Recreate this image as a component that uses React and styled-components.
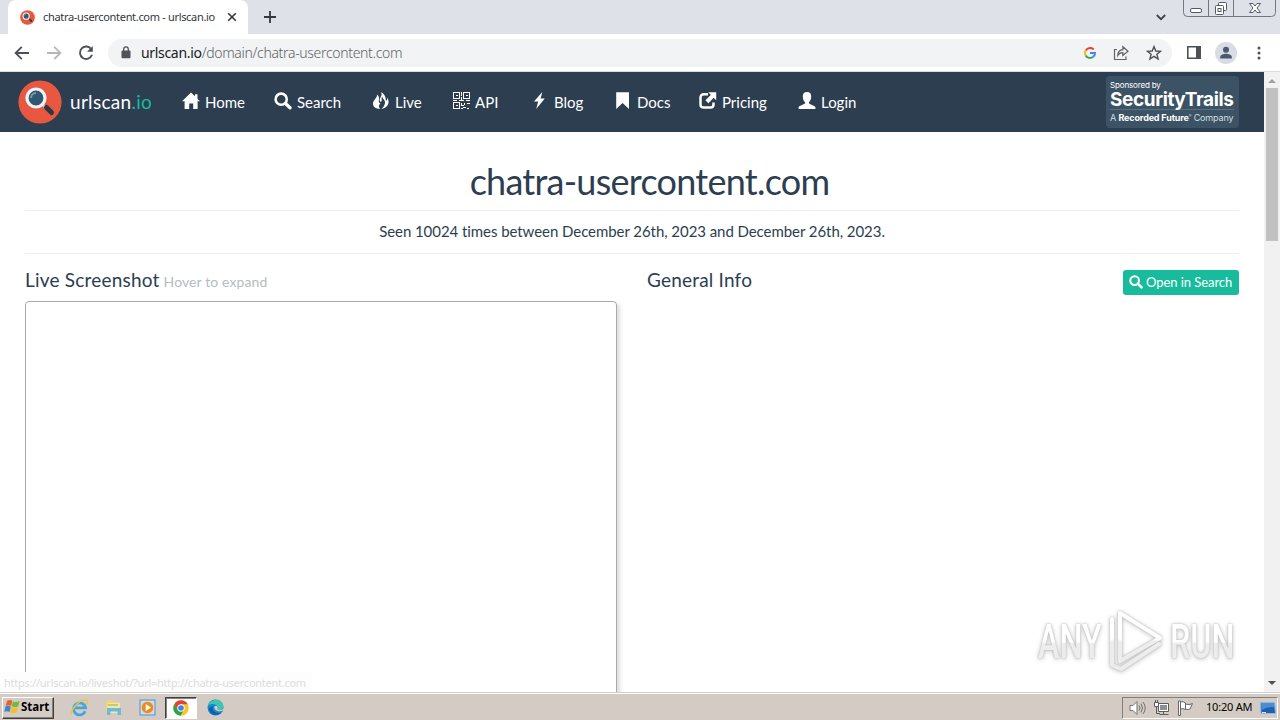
import React from "react";
import styled, { createGlobalStyle } from "styled-components";

const navItems = [
  { icon: "home", label: "Home", width: 92 },
  { icon: "search", label: "Search", width: 98 },
  { icon: "fire", label: "Live", width: 80 },
  { icon: "qrcode", label: "API", width: 79 },
  { icon: "flash", label: "Blog", width: 83 },
  { icon: "bookmark", label: "Docs", width: 85 },
  { icon: "share", label: "Pricing", width: 99 },
  { icon: "user", label: "Login", width: 62 },
];

const glyphs = {
  home: <path d="M9 0.5 L13 4.3 V2.2 H15.5 V6.8 L18 9.3 H15.6 V17 H11.2 V11.5 H7.2 V17 H2.6 V9.3 H0 Z" />,
  search: (
    <>
      <circle cx="7.2" cy="7.2" r="5.6" fill="none" stroke="currentColor" strokeWidth="2.6" />
      <path d="M11.5 11.5 L16 15.8" stroke="currentColor" strokeWidth="3.3" strokeLinecap="round" />
    </>
  ),
  fire: (
    <path d="M8.6 0 C11.6 3 7.1 5.5 7.7 8.4 C8 10.2 9.6 10.2 9.7 8.6 C9.8 7 9.2 6.2 10.1 4.4 C10.8 7.2 13 7.6 13 10.2 C13 12.8 11.8 14.8 9.4 17 C16 15.7 18.2 10.5 15.4 5.4 C15.4 7.6 14.7 8.6 13.8 8.7 C14.1 5 12.3 1.5 8.6 0 Z M5 2.6 C5.4 6 1 8 1 11.7 C1 14.7 3.6 16.7 8.2 17 C6.2 14.8 6.8 13.2 8.4 11.6 C6 10.6 7 7.7 7 6.2 C7 4.8 6 3.4 5 2.6 Z" />
  ),
  qrcode: (
    <g fill="none" stroke="currentColor" strokeWidth="1.1" shapeRendering="crispEdges">
      <path d="M1.5 .5H7.5V6.5H1.5Z M11.5 .5H17.5V6.5H11.5Z M1.5 10.5H7.5V16.5H1.5Z" />
      <path d="M4 3.5H5.5 M14 3.5H15.5 M4 13.5H5.5" />
      <path d="M9.5 0V3 M8.5 3.5H10 M9.5 5V8 M1 8.5H5 M7 8.5H12 M13.5 8.5H17.5 M9.5 11V13.5H12 M12.5 10.5V13 M15 11.5H17.5 M10.5 15.5H14 M9 16.5H11 M15 16.5H17" />
    </g>
  ),
  flash: <path d="M11.3 0 L3 9.4 H7.2 L5.2 17 L13.8 6.6 H9.6 Z" />,
  bookmark: <path d="M2.2 0.3 H15 V17 L8.6 11 L2.2 17 Z" />,
  share: (
    <>
      <path d="M9 2.2H5C2.7 2.2 1.5 3.4 1.5 5.5V12.5C1.5 14.6 2.7 15.6 5 15.6H11.4C13.5 15.6 14.5 14.6 14.5 12.5V10.5" fill="none" stroke="currentColor" strokeWidth="2.5" />
      <path d="M9.3 0.2H17.2V8.2L14.7 5.8L9.4 11.2L6.4 8.2L11.8 2.9Z" />
    </>
  ),
  user: <path d="M9 0 C6 0 4.6 1.8 4.8 4.7 C4.9 7.2 5.7 8.9 7 10.2 V11.5 C4.5 13.2 1.1 13.7 0.6 15.2 V17 H17.4 V15.2 C16.9 13.7 13.5 13.2 11 11.5 V10.2 C12.3 8.9 13.1 7.2 13.2 4.7 C13.4 1.8 12 0 9 0 Z" />,
};

function Glyph({ name, size = 18 }) {
  return (
    <svg width={size} height={size} viewBox="0 0 18 18" fill="currentColor">
      {glyphs[name]}
    </svg>
  );
}

function UrlscanLogo({ size }) {
  return (
    <svg width={size} height={size} viewBox="0 0 44 44">
      <circle cx="22" cy="22" r="21.6" fill="#e8573f" />
      <path d="M25 25 L28 28" stroke="#b9bec2" strokeWidth="3" />
      <path d="M28.5 27.5 L33.5 32.5" stroke="#2c3747" strokeWidth="5" strokeLinecap="round" />
      <circle cx="18" cy="18" r="9" fill="#2f5873" stroke="#f1f3f3" strokeWidth="3.2" />
      <path d="M13 18 A5 5 0 0 1 18 13" stroke="#7898ac" strokeWidth="2" fill="none" />
    </svg>
  );
}

function TabStrip() {
  return (
    <Strip>
      <Tab>
        <UrlscanLogo size={15} />
        <TabTitle>chatra-usercontent.com - urlscan.io</TabTitle>
        <svg width="10" height="10" viewBox="0 0 10 10" stroke="#35383c" strokeWidth="1.6">
          <path d="M1.2 1.2 L8.8 8.8 M8.8 1.2 L1.2 8.8" />
        </svg>
      </Tab>
      <NewTab>
        <svg width="12" height="12" viewBox="0 0 12 12" stroke="#35383c" strokeWidth="1.8">
          <path d="M6 0V12 M0 6H12" />
        </svg>
      </NewTab>
      <TabSearch>
        <svg width="10" height="7" viewBox="0 0 10 7" fill="none" stroke="#404348" strokeWidth="1.8">
          <path d="M.8 1 L5 5.2 L9.2 1" />
        </svg>
      </TabSearch>
      <WindowButtons>
        <svg width="94" height="18" viewBox="0 0 94 18" fill="none" stroke="#73777f">
          <path d="M.5 0V12.5Q.5 16.5 4.5 16.5H88.5Q92.5 16.5 92.5 12.5V0 M25.5 0V16 M50.5 0V16" />
          <rect x="7.5" y="8.5" width="11" height="4" rx="1.5" fill="#fff" stroke="#565a61" />
          <g stroke="#565a61">
            <rect x="35.5" y="2.5" width="8" height="8" rx="1" fill="#fff" />
            <rect x="32.5" y="5.5" width="8" height="9" rx="1" fill="#fff" />
            <rect x="35" y="8.5" width="3" height="3" />
            <path d="M66.5 3.5H70L72 6L74 3.5H77.5L74 8L77.5 12.5H74L72 10L70 12.5H66.5L70 8Z" fill="#fff" />
          </g>
        </svg>
      </WindowButtons>
    </Strip>
  );
}

function AddressBar() {
  return (
    <Toolbar>
      <NavButtons>
        <svg width="16" height="14" viewBox="0 0 16 14" fill="none" stroke="#4d5156" strokeWidth="1.8">
          <path d="M15 7H2 M7.8 .8L1.6 7L7.8 13.2" />
        </svg>
        <svg width="16" height="14" viewBox="0 0 16 14" fill="none" stroke="#b5b7ba" strokeWidth="1.8">
          <path d="M1 7H14 M8.2 .8L14.4 7L8.2 13.2" />
        </svg>
        <svg width="16" height="16" viewBox="0 0 16 16" fill="none" stroke="#4d5156" strokeWidth="1.9">
          <path d="M13.4 4.4 A6.2 6.2 0 1 0 14 9.8" />
          <path d="M14.8 1V6.8H9Z" fill="#4d5156" stroke="none" />
        </svg>
      </NavButtons>
      <Omnibox>
        <svg width="10" height="13" viewBox="0 0 10 13">
          <rect x=".5" y="4.4" width="9" height="7.8" rx="1" fill="#505459" />
          <path d="M2.7 5V3.2A2.3 2.3 0 0 1 7.3 3.2V5" fill="none" stroke="#505459" strokeWidth="1.3" />
        </svg>
        <Url>
          <b>urlscan.io</b>/domain/chatra-usercontent.com
        </Url>
        <OmniIcons>
          <svg width="12" height="12" viewBox="0 0 12 12" fill="none" strokeWidth="2">
            <path d="M9.7 2.5 A5 5 0 0 0 1.8 3.4" stroke="#ea4335" />
            <path d="M1.8 3.4 A5 5 0 0 0 1.7 8.5" stroke="#fbbc05" />
            <path d="M1.7 8.5 A5 5 0 0 0 9.2 9.8" stroke="#34a853" />
            <path d="M9.2 9.8 A5 5 0 0 0 11 6H6" stroke="#4285f4" />
          </svg>
          <svg width="16" height="16" viewBox="0 0 16 16" fill="none" stroke="#5f6368" strokeWidth="1.2">
            <path d="M4 4.5H1.5V14.5H13V11.5" />
            <path d="M4.7 10.5C4.9 7 6.7 5 9.9 4.7V1.7L15 6.2L9.9 10.5V7.7C7.5 7.6 6 8.5 4.7 10.5Z" />
          </svg>
          <svg width="16" height="16" viewBox="0 0 16 16" fill="none" stroke="#4d5156" strokeWidth="1.4">
            <path d="M8 1.6L9.8 6L14.6 6.3L10.9 9.3L12.1 14L8 11.4L3.9 14L5.1 9.3L1.4 6.3L6.2 6Z" />
          </svg>
        </OmniIcons>
      </Omnibox>
      <BrowserIcons>
        <svg width="14" height="13" viewBox="0 0 14 13">
          <path d="M.8 .8H13.2V12.2H.8Z" fill="none" stroke="#4d5156" strokeWidth="1.6" />
          <path d="M9 0H14V13H9Z" fill="#4d5156" />
        </svg>
        <svg width="22" height="22" viewBox="0 0 22 22">
          <circle cx="11" cy="11" r="11" fill="#d9dce2" />
          <circle cx="11" cy="7.8" r="3" fill="#4b5973" />
          <path d="M5.2 16.5V15C5.2 12.7 8.7 11.8 11 11.8S16.8 12.7 16.8 15V16.5Z" fill="#4b5973" />
        </svg>
        <svg width="4" height="14" viewBox="0 0 4 14" fill="#4d5156">
          <circle cx="2" cy="2" r="1.5" />
          <circle cx="2" cy="7" r="1.5" />
          <circle cx="2" cy="12" r="1.5" />
        </svg>
      </BrowserIcons>
    </Toolbar>
  );
}

function SiteNav() {
  return (
    <Navbar>
      <UrlscanLogo size={44} />
      <Brand>
        urlscan<span>.io</span>
      </Brand>
      {navItems.map((item) => (
        <NavItem key={item.label} $width={item.width}>
          <Glyph name={item.icon} />
          <span>{item.label}</span>
        </NavItem>
      ))}
      <Sponsor>
        <SponsorSmall>Sponsored by</SponsorSmall>
        <SponsorName>SecurityTrails</SponsorName>
        <SponsorCompany>
          A <b>Recorded Future</b>
          <sup>®</sup> Company
        </SponsorCompany>
      </Sponsor>
    </Navbar>
  );
}

function Watermark() {
  return (
    <WatermarkBox>
      <WatermarkText>ANY</WatermarkText>
      <svg width="58" height="66" viewBox="0 0 58 66" fill="none" strokeLinejoin="round" strokeLinecap="round">
        <defs>
          <linearGradient id="mark" gradientUnits="userSpaceOnUse" x1="0" y1="0" x2="0" y2="62">
            <stop offset="0.5" stopColor="#fff" />
            <stop offset="0.54" stopColor="#ededed" />
          </linearGradient>
        </defs>
        <g stroke="url(#mark)" strokeWidth="4">
          <path d="M13 5 L53 30 L13 53 Z" />
          <path d="M5 11 V57 L14 61 L52 36" />
        </g>
      </svg>
      <WatermarkText>RUN</WatermarkText>
    </WatermarkBox>
  );
}

function Taskbar() {
  return (
    <TaskbarRow>
      <StartButton>
        <svg width="17" height="15" viewBox="0 0 17 15">
          <path d="M3 2Q6 0 8.3 1.8L7 7Q4.5 5.4 1.7 7Z" fill="#e8602c" />
          <path d="M8.9 2.2Q12 4 15.5 2L14.2 7.2Q11 9 7.6 7.3Z" fill="#75b83b" />
          <path d="M1.5 7.6Q4.3 6 6.8 7.8L5.6 13Q3 11.5.3 13Z" fill="#3f83cf" />
          <path d="M7.4 8.1Q11 9.8 14 8L12.6 13.2Q9.6 15 6.2 13.3Z" fill="#f3bd2e" />
        </svg>
        Start
      </StartButton>
      <Launchers>
        <Launcher>
          <svg width="19" height="18" viewBox="0 0 19 18" fill="none">
            <path d="M15.2 12.3A6 6 0 1 1 15.6 8.9H5" stroke="#46a5dd" strokeWidth="2.8" />
            <path d="M1.5 15.8C-.5 13 9-.5 16.5 1.3C18 1.8 17.6 3.8 16.5 5.5" stroke="#ebc34c" strokeWidth="1.5" />
          </svg>
        </Launcher>
        <Launcher>
          <svg width="17" height="17" viewBox="0 0 17 17">
            <path d="M1 3L3 1H7L8 3H14V13H1Z" fill="#efd47b" />
            <path d="M3 4H15V14H2Z" fill="#f8e7a4" />
            <path d="M2 9H16V16H12.5V12.5H5.5V16H2Z" fill="#70b9dc" />
            <path d="M3 6H13" stroke="#7eb05a" />
          </svg>
        </Launcher>
        <Launcher>
          <svg width="17" height="17" viewBox="0 0 17 17">
            <rect x="1" y="1" width="15" height="15" fill="#c5def1" stroke="#5b91bf" />
            <circle cx="8.5" cy="8.5" r="5.8" fill="#f28a1b" />
            <path d="M6.7 5L12 8.5L6.7 12Z" fill="#fff" />
          </svg>
        </Launcher>
        <Launcher $active>
          <svg width="16" height="16" viewBox="0 0 16 16">
            <circle cx="8" cy="8" r="7.7" fill="#f9c51e" />
            <path d="M1.3 4.2A7.7 7.7 0 0 1 14.7 4.2H8L5 10Z" fill="#de4435" />
            <path d="M1.3 4.2A7.7 7.7 0 0 0 7.5 15.7L11 9.8L5 10Z" fill="#2fa14e" />
            <circle cx="8" cy="8" r="3.7" fill="#fff" />
            <circle cx="8" cy="8" r="2.8" fill="#4083e8" />
          </svg>
        </Launcher>
        <Launcher>
          <svg width="17" height="17" viewBox="0 0 17 17">
            <circle cx="8.5" cy="8.5" r="8" fill="#1689cf" />
            <path d="M.6 7.5C2 .2 15-2.2 16.5 7.5C16.7 10.5 12 11.6 10 10.2C12 7 8 4.5 4.8 5.1C2.8 5.4 1.4 6.3.6 7.5Z" fill="#3fc6b0" />
            <path d="M6.5 7C4.2 10 7 14.8 13.8 13.8C9 18.5 1 14.5 2.2 8.8Z" fill="#1260a8" />
            <path d="M10 10.2C12 8.4 9.7 5.8 7.4 7.4C6.7 10.8 11 13.3 15.5 11.8L16.9 9.4C15 11 12 11.2 10 10.2Z" fill="#d4ccc4" />
          </svg>
        </Launcher>
      </Launchers>
      <Tray>
        <svg width="17" height="16" viewBox="0 0 17 16" fill="none" stroke="#71716f">
          <path d="M1 5.5H4L8 1.5V14.5L4 10.5H1Z" fill="#fff" />
          <path d="M10 5.5Q12 8 10 10.5 M12 3.5Q15 8 12 12.5 M14 2Q18.5 8 14 14" />
        </svg>
        <svg width="17" height="16" viewBox="0 0 17 16" fill="none" stroke="#5b5d5c">
          <path d="M5.5 3.5H15.5V11.5H5.5Z" fill="#fff" />
          <path d="M7 5H14V10H7Z" fill="#8a9297" stroke="none" />
          <path d="M6.5 14.5H15.5 M10.5 12V14 M3.5 5V13.5H7" />
          <path d="M1.5 2.5H5.5V6.5H1.5Z" fill="#fff" />
          <path d="M2.5 0V2 M4.5 0V2" />
        </svg>
        <svg width="17" height="16" viewBox="0 0 17 16" fill="#fff" stroke="#686866">
          <path d="M1.5 1V15.5H3.5V1Z M3.5 2Q6 .8 8.5 3V9.5Q6 8 3.5 9Z M8.5 4Q12 5.5 15.5 3.5L13 9Q11 10 8.5 9Z" />
        </svg>
        <Clock>10:20 AM</Clock>
        <svg width="16" height="14" viewBox="0 0 16 14">
          <path d="M.5 1.5H14.5L15.5 12.5H1Z" fill="#225fae" stroke="#8eb9df" />
          <path d="M1 2H14L14.5 6Q7 5.5 1.5 9Z" fill="#498ed3" />
          <path d="M2 11.5H6" stroke="#dce8ef" />
        </svg>
      </Tray>
    </TaskbarRow>
  );
}

export default function App() {
  return (
    <Screen>
      <GlobalStyle />
      <TabStrip />
      <AddressBar />
      <Viewport>
        <Page>
          <SiteNav />
          <Content>
            <Title>chatra-usercontent.com</Title>
            <Seen>Seen 10024 times between December 26th, 2023 and December 26th, 2023.</Seen>
            <Columns>
              <Shot>
                <Heading>
                  Live Screenshot <small>Hover to expand</small>
                </Heading>
                <ShotFrame />
              </Shot>
              <Info>
                <Heading>General Info</Heading>
                <SearchButton>
                  <Glyph name="search" size={14} />
                  <span>Open in Search</span>
                </SearchButton>
              </Info>
            </Columns>
          </Content>
        </Page>
        <Scrollbar>
          <svg width="8" height="4" viewBox="0 0 8 4" fill="#a0a0a0">
            <path d="M0 4L4 0L8 4Z" />
          </svg>
          <Thumb />
          <svg width="8" height="4" viewBox="0 0 8 4" fill="#505050">
            <path d="M0 0H8L4 4Z" />
          </svg>
        </Scrollbar>
        <StatusBubble>https://urlscan.io/liveshot/?url=http://chatra-usercontent.com</StatusBubble>
        <Watermark />
      </Viewport>
      <Taskbar />
    </Screen>
  );
}

const GlobalStyle = createGlobalStyle`
  body {
    margin: 0;
    overflow: hidden;
  }
  * {
    box-sizing: border-box;
  }
  svg {
    display: block;
    flex-shrink: 0;
  }
`;

const Screen = styled.div`
  width: 1280px;
  height: 720px;
  display: flex;
  flex-direction: column;
  overflow: hidden;
  background: #fff;
  font-family: "Noto Sans", sans-serif;
  font-variant-ligatures: none;
  white-space: nowrap;
`;

const Strip = styled.div`
  height: 34px;
  flex-shrink: 0;
  display: flex;
  background: #dee1e7;
  padding-left: 8px;
`;

const Tab = styled.div`
  width: 240px;
  height: 34px;
  display: flex;
  align-items: center;
  padding-left: 12px;
  background: #fff;
  border-radius: 8px 8px 0 0;
`;

const TabTitle = styled.span`
  width: 177px;
  margin: -2px 7px 0 8px;
  font-size: 11px;
  letter-spacing: -0.32px;
  color: #34373b;
`;

const NewTab = styled.div`
  padding: 11px 0 0 16px;
`;

const TabSearch = styled.div`
  margin-left: auto;
  padding: 14px 17px 0 0;
`;

const WindowButtons = styled.div`
  width: 97px;
`;

const Toolbar = styled.div`
  height: 38px;
  flex-shrink: 0;
  display: flex;
  align-items: center;
  border-bottom: 1px solid #d8dbe0;
  background: #fff;
`;

const NavButtons = styled.div`
  width: 108px;
  display: flex;
  gap: 16px;
  padding-left: 14px;
  align-items: center;
`;

const Omnibox = styled.div`
  width: 1064px;
  height: 28px;
  display: flex;
  align-items: center;
  padding: 0 10px 0 13px;
  border-radius: 14px;
  background: #f1f3f4;
`;

const Url = styled.span`
  margin-left: 10px;
  font-size: 14px;
  font-weight: 300;
  letter-spacing: -0.32px;
  color: #5f6368;

  b {
    font-weight: 400;
    color: #202124;
  }
`;

const OmniIcons = styled.div`
  display: flex;
  align-items: center;
  gap: 17px;
  margin-left: auto;
`;

const BrowserIcons = styled.div`
  display: flex;
  align-items: center;
  padding-left: 15px;

  svg:nth-child(2) {
    margin: 0 20px 0 14px;
  }
`;

const Viewport = styled.div`
  position: relative;
  height: 620px;
  flex-shrink: 0;
  display: flex;
  overflow: hidden;
`;

const Page = styled.div`
  width: 1264px;
  font-family: Lato, sans-serif;
  color: #2c3e50;
`;

const Navbar = styled.div`
  height: 60px;
  display: flex;
  align-items: center;
  padding-left: 18px;
  background: #2c3e50;
  color: #fff;
`;

const Brand = styled.span`
  width: 112px;
  margin: -2px 0 0 8px;
  font-size: 19px;
  letter-spacing: 0.3px;

  span {
    color: #18bc9c;
  }
`;

const NavItem = styled.div`
  width: ${(p) => p.$width}px;
  display: flex;
  align-items: center;
  gap: 5px;
  font-size: 15px;

  svg {
    margin-top: -3px;
  }
`;

const Sponsor = styled.div`
  width: 133px;
  height: 52px;
  margin: 0 25px 0 auto;
  padding: 4px 5px 0 4px;
  border-radius: 4px;
  background: #3b5364;
  font-family: Inter, sans-serif;
`;

const SponsorSmall = styled.div`
  font-size: 8px;
  line-height: 10px;
  letter-spacing: -0.15px;
`;

const SponsorName = styled.div`
  height: 20px;
  font-size: 19px;
  line-height: 20px;
  font-weight: 700;
  letter-spacing: -0.4px;
  border-bottom: 1px solid #58707e;
`;

const SponsorCompany = styled.div`
  font-size: 9px;
  line-height: 15px;
  letter-spacing: -0.15px;
  color: #d7dfe3;

  b {
    color: #fff;
  }
  sup {
    font-size: 4px;
    line-height: 0;
  }
`;

const Content = styled.div`
  margin: 0 25px;
`;

const Title = styled.h1`
  height: 79px;
  margin: 0;
  padding: 26px 0 0 35px;
  border-bottom: 1px solid #eceff1;
  font-size: 36px;
  line-height: 46px;
  font-weight: 400;
  letter-spacing: -0.74px;
  text-align: center;
`;

const Seen = styled.div`
  height: 43px;
  border-bottom: 1px solid #eceff1;
  font-size: 15px;
  line-height: 41px;
  letter-spacing: -0.06px;
  text-align: center;
`;

const Columns = styled.div`
  display: flex;
  justify-content: space-between;
`;

const Shot = styled.div`
  width: 592px;
`;

const Info = styled.div`
  width: 592px;
  display: flex;
  justify-content: space-between;
  align-items: flex-start;
`;

const Heading = styled.h4`
  height: 47px;
  margin: 0;
  font-size: 19px;
  line-height: 52px;
  font-weight: 400;
  letter-spacing: 0.2px;

  small {
    margin-left: -1px;
    font-size: 14px;
    letter-spacing: 0.1px;
    color: #b4bcc2;
  }
`;

const ShotFrame = styled.div`
  height: 420px;
  border: 1px solid #aaa;
  border-radius: 4px;
  box-shadow: 3px 3px 4px #ddd;
`;

const SearchButton = styled.button`
  width: 116px;
  height: 25px;
  margin-top: 16px;
  padding: 0 0 1px 6px;
  display: flex;
  align-items: center;
  gap: 3px;
  border: none;
  border-radius: 3px;
  background: #18bc9c;
  color: #fff;
  font-family: Lato, sans-serif;
  font-size: 13px;
  letter-spacing: -0.06px;
`;

const Scrollbar = styled.div`
  width: 16px;
  display: flex;
  flex-direction: column;
  align-items: center;
  padding: 7px 0;
  background: #f1f1f1;

  svg:last-child {
    margin-top: auto;
  }
`;

const Thumb = styled.div`
  width: 12px;
  height: 153px;
  margin-top: 5px;
  background: #c1c1c1;
`;

const StatusBubble = styled.div`
  position: absolute;
  left: 0;
  bottom: 0;
  width: 312px;
  height: 20px;
  padding-left: 4px;
  background: #fdfdfd;
  font-size: 11px;
  line-height: 21px;
  letter-spacing: -0.26px;
  color: #dcdcdc;
`;

const WatermarkBox = styled.div`
  position: absolute;
  left: 1038px;
  top: 536px;
  width: 200px;
  display: flex;
  align-items: center;
  gap: 5px;
  filter: drop-shadow(0 0 1px #bbb) drop-shadow(0 1px 2px #ccc);
`;

const WatermarkText = styled.span`
  width: 64px;
  font-family: Roboto, sans-serif;
  font-size: 49px;
  font-weight: 500;
  color: transparent;
  background: linear-gradient(#fff 50%, #ededed 54%);
  background-clip: text;
  -webkit-background-clip: text;

  /* wider than its box, then squeezed back to a condensed face */
  min-width: 95px;
  margin-right: -31px;
  transform: scaleX(0.66);
  transform-origin: left center;
`;

const TaskbarRow = styled.div`
  height: 28px;
  flex-shrink: 0;
  display: flex;
  align-items: center;
  padding: 2px 2px 0;
  border-top: 1px solid #d4d0c8;
  box-shadow: inset 0 1px #fff;
  background: #d4ccc4;
`;

const StartButton = styled.div`
  width: 52px;
  height: 22px;
  display: flex;
  align-items: center;
  padding: 0 0 2px 1px;
  border: 1px solid;
  border-color: #fff #404040 #404040 #fff;
  box-shadow: inset -1px -1px #808080;
  font-size: 11.5px;
  font-weight: 700;
  color: #000;
`;

const Launchers = styled.div`
  display: flex;
  gap: 2px;
  margin-left: 9px;
`;

const Launcher = styled.div`
  width: 32px;
  height: 22px;
  display: flex;
  align-items: center;
  justify-content: center;
  border: 1px solid transparent;
  ${(p) =>
    p.$active &&
    `
    background: #fff;
    border-color: #404040 #fff #fff #404040;
    box-shadow: inset 1px 1px #808080;
  `}
`;

const Tray = styled.div`
  width: 156px;
  height: 22px;
  margin-left: auto;
  display: flex;
  align-items: center;
  gap: 7px;
  padding-left: 6px;
  border: 1px solid;
  border-color: #808080 #fff #fff #808080;
`;

const Clock = styled.span`
  width: 47px;
  margin: -2px 0 0 5px;
  font-size: 11px;
  letter-spacing: -0.2px;
  color: #000;
`;
